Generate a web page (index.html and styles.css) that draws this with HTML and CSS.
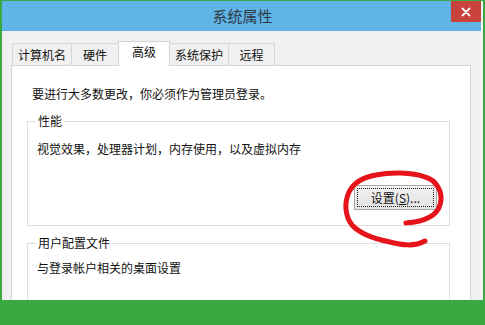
FILE: index.html
```html
<!DOCTYPE html>
<html lang="zh-CN">
<head>
<meta charset="utf-8">
<title>系统属性</title>
<link rel="stylesheet" href="styles.css">
</head>
<body>
<div class="window">
  <div class="titlebar">
    <span class="title">系统属性</span>
    <div class="close">
      <svg width="10" height="10" viewBox="0 0 10 10"><path d="M1.5 1.5 L8.5 8.5 M8.5 1.5 L1.5 8.5" stroke="#fff" stroke-width="1.8" stroke-linecap="round"/></svg>
    </div>
  </div>
  <div class="tabs">
    <div class="tab t1">计算机名</div>
    <div class="tab t2">硬件</div>
    <div class="tab t3 active">高级</div>
    <div class="tab t4">系统保护</div>
    <div class="tab t5">远程</div>
  </div>
  <div class="panel">
    <p class="intro">要进行大多数更改，你必须作为管理员登录。</p>
    <fieldset class="group g1">
      <legend>性能</legend>
      <p class="desc">视觉效果，处理器计划，内存使用，以及虚拟内存</p>
      <div class="actions"><button class="btn">设置(<u>S</u>)...</button></div>
    </fieldset>
    <fieldset class="group g2">
      <legend>用户配置文件</legend>
      <p class="desc">与登录帐户相关的桌面设置</p>
    </fieldset>
  </div>
</div>
<svg class="mark" width="485" height="325" viewBox="0 0 485 325">
  <path d="M406,223 C420,222 436,218 440,205 C444,192 436,180 425,177 C412,172 390,172 376,175 C364,177 354,182 349,192 C344,203 345,216 352,225 C360,234 375,239 390,242 C402,245 414,247 425,241" fill="none" stroke="#e5141b" stroke-width="5" stroke-linecap="round" stroke-linejoin="round"/>
</svg>
</body>
</html>
```
FILE: styles.css
```css
html, body {
  margin: 0;
  padding: 0;
}
body {
  width: 485px;
  height: 325px;
  background: #3aa940;
  overflow: hidden;
  position: relative;
  font-family: "Noto Sans CJK SC", "Noto Sans", sans-serif;
  font-size: 12px;
  color: #111111;
}
.window {
  margin: 1px 0 0 2px;
  width: 481px;
  height: 299px;
  background: #f0f0f0;
  overflow: hidden;
  box-sizing: border-box;
  border-right: 2px solid #f4f6f8;
}
.titlebar {
  position: relative;
  height: 30px;
  background: #60b4e8;
  display: flex;
  align-items: center;
  justify-content: center;
}
.title {
  font-size: 15px;
  color: #2d3a44;
  line-height: 20px;
  margin-left: 2px;
}
.close {
  position: absolute;
  top: 0;
  right: 0;
  width: 30px;
  height: 21px;
  background: #c7433b;
  display: flex;
  align-items: center;
  justify-content: center;
}
.tabs {
  display: flex;
  align-items: flex-end;
  margin: 10px 0 0 10px;
  height: 24px;
  position: relative;
  z-index: 2;
}
.tab {
  box-sizing: border-box;
  height: 22px;
  border: 1px solid #d6d6d6;
  border-bottom: none;
  background: #f0f0f0;
  display: flex;
  align-items: center;
  justify-content: center;
  line-height: 14px;
  margin-left: -1px;
}
.t1 { width: 60px; margin-left: 0; }
.t2 { width: 48px; }
.t3 { width: 52px; }
.t4 { width: 60px; }
.t5 { width: 47px; }
.tab.active {
  height: 25px;
  margin-bottom: -1px;
  background: #ffffff;
  padding-bottom: 4px;
  position: relative;
  z-index: 3;
}
.panel {
  margin-left: 9px;
  width: 460px;
  height: 260px;
  box-sizing: border-box;
  background: #ffffff;
  border: 1px solid #d6d6d6;
  position: relative;
  z-index: 1;
  padding-top: 20px;
}
.intro {
  margin: 0 0 0 20px;
  line-height: 16px;
}
.group {
  margin: 12px 20px 0 15px;
  border: 1px solid #dedede;
  padding: 13px 12px 15px 9px;
}
.group legend {
  padding: 0 2px;
  line-height: 14px;
  margin-left: -1px;
}
.desc {
  margin: 0;
  line-height: 16px;
}
.actions {
  display: flex;
  justify-content: flex-end;
  margin-top: 28px;
}
.btn {
  width: 83px;
  height: 25px;
  box-sizing: border-box;
  border: 1px solid #a9a9a9;
  background: linear-gradient(#f2f2f2, #e3e3e3);
  font-family: "Noto Sans CJK SC", "Noto Sans", sans-serif;
  font-size: 12px;
  color: #111111;
  line-height: 14px;
  padding: 0;
  outline: 1px dotted #222;
  outline-offset: -4px;
}
.g2 {
  margin-top: 10px;
  padding-top: 10px;
  height: 80px;
}
.mark {
  position: absolute;
  top: 0;
  left: 0;
  z-index: 10;
  pointer-events: none;
}
```
